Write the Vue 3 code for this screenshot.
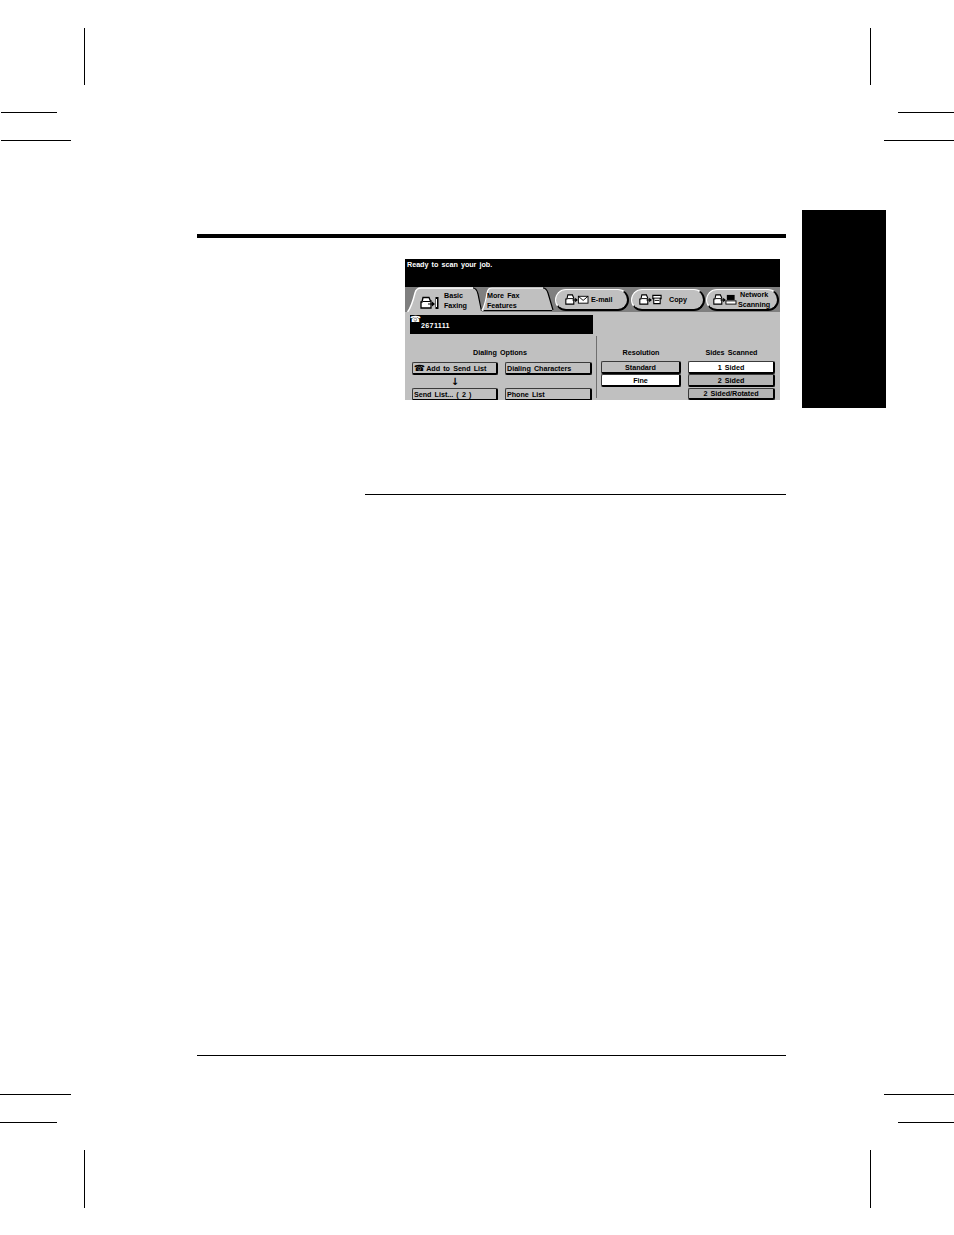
<script setup>
const crops = [
  ['v', 84, 28, 57], ['v', 870, 28, 57], ['v', 84, 1150, 58], ['v', 870, 1150, 58],
  ['h', 1, 112, 56], ['h', 1, 140, 70], ['h', 898, 112, 56], ['h', 884, 140, 70],
  ['h', 0, 1094, 71], ['h', 0, 1122, 57], ['h', 884, 1094, 70], ['h', 898, 1122, 56]
].map(([d, x, y, l]) => ({
  d,
  style: d === 'v'
    ? { left: x + 'px', top: y + 'px', height: l + 'px' }
    : { left: x + 'px', top: y + 'px', width: l + 'px' }
}))

const pills = [
  { id: 'mail', lines: ['E-mail'], cls: 'p-mail' },
  { id: 'copy', lines: ['Copy'], cls: 'p-copy' },
  { id: 'net', lines: ['Network', 'Scanning'], cls: 'p-net' }
]
</script>

<template>
  <div class="page">
    <i v-for="(c, n) in crops" :key="n" class="crop" :class="c.d" :style="c.style"></i>
    <div class="thumb"></div>

    <main class="main">
      <div class="rule-top"></div>

      <section class="panel">
        <div class="status">Ready to scan your job.</div>

        <div class="strip">
          <div class="trap active">
            <svg class="trap-bg" viewBox="0 0 75 25" width="75" height="25">
              <path d="M0.5 25 C3 22 6 14 8 6 C9 2 11 1 14 1 L66 1 C69 1 70 3 71 7 L75 25 Z" fill="#c0c0c0" />
              <path d="M0.5 25 C3 22 6 14 8 6 C9 2 11 1 14 1 L66 1" fill="none" stroke="#fff" stroke-width="1.4" />
              <path d="M66 1 C69 1 70 3 71 7 L74.5 24" fill="none" stroke="#000" stroke-width="1.2" />
            </svg>
            <svg class="icon" viewBox="0 0 19 14" width="19" height="14">
              <path d="M3 1.5 H9 L10.5 5 H11 V12 H1 V6 H2 Z" fill="#fff" stroke="#000" stroke-width="1.3" />
              <path d="M3 5.5 H10" stroke="#000" />
              <path d="M8 7.5 H12 V5.5 L15 8 L12 10.5 V8.5 H8 Z" fill="#000" />
              <path d="M15.5 1 H18.5 V13 H15.5 Z" fill="#000" />
              <path d="M16.5 3 V11" stroke="#fff" />
            </svg>
            <span class="tlabel"><span>Basic</span><span>Faxing</span></span>
          </div>

          <div class="trap more">
            <svg class="trap-bg" viewBox="0 0 73 25" width="73" height="25">
              <path d="M0 23 C3 20 5 12 6 6 C7 2 8 1 11 1 L62 1 C65 1 66 3 67 6 L72 23 Z" fill="#c0c0c0" />
              <path d="M1 24 C3 20 5 12 6 6 C7 2 8 1 11 1 L62 1" fill="none" stroke="#fff" stroke-width="1.2" />
              <path d="M62 1 C65 1 66 3 67 6 L72 23" fill="none" stroke="#000" stroke-width="1.2" />
              <path d="M3 23.5 H71" stroke="#000" stroke-width="1.2" />
            </svg>
            <span class="tlabel"><span>More Fax</span><span>Features</span></span>
          </div>

          <div v-for="p in pills" :key="p.id" class="pill" :class="p.cls">
            <svg class="icon" viewBox="0 0 26 12" width="24" height="11">
              <path d="M3 1 H8 L9.5 4.5 V11 H0.8 V5.5 H2 Z" fill="#fff" stroke="#000" stroke-width="1.2" />
              <path d="M2.5 5 H9" stroke="#000" />
              <path d="M8 6 H11 V4 L14 6.5 L11 9 V7.2 H8 Z" fill="#000" />
              <template v-if="p.id === 'mail'">
                <rect x="14.5" y="2.5" width="10.5" height="7.5" fill="#fff" stroke="#000" />
                <path d="M14.5 2.5 L19.7 7 L25 2.5" fill="none" stroke="#000" />
              </template>
              <template v-else-if="p.id === 'copy'">
                <path d="M15 1.5 H24 V5 H23 V10.5 H16 V5 H15 Z" fill="#fff" stroke="#000" stroke-width="1.2" />
                <path d="M15 4.5 H24 M17 7 H22" stroke="#000" />
              </template>
              <template v-else>
                <rect x="15" y="1" width="8.5" height="5.5" fill="#000" />
                <rect x="14" y="7.5" width="11" height="3.5" fill="#fff" stroke="#000" />
              </template>
            </svg>
            <span class="tlabel"><span v-for="l in p.lines" :key="l">{{ l }}</span></span>
          </div>
        </div>

        <div class="body">
          <div class="left">
            <div class="field">
              <span class="field-phone">☎</span>
              <span class="field-num">2671111</span>
            </div>
            <h4 class="head">Dialing Options</h4>
            <div class="dial">
              <button class="btn start"><span class="phone">☎</span>Add to Send List</button>
              <button class="btn start">Dialing Characters</button>
              <span class="arrow">↓</span>
              <span></span>
              <button class="btn start">Send List... ( 2 )</button>
              <button class="btn start">Phone List</button>
            </div>
          </div>

          <div class="right">
            <div class="col res">
              <h4 class="head">Resolution</h4>
              <button class="btn">Standard</button>
              <button class="btn on">Fine</button>
            </div>
            <div class="col sides">
              <h4 class="head">Sides Scanned</h4>
              <button class="btn on">1 Sided</button>
              <button class="btn dim">2 Sided</button>
              <button class="btn dim last">2 Sided/Rotated</button>
            </div>
          </div>
        </div>
      </section>

      <div class="rule-mid"></div>
      <div class="rule-bot"></div>
    </main>
  </div>
</template>

<style>
html, body { margin: 0; background: #fff; }
</style>

<style scoped>
.page {
  position: relative;
  width: 954px;
  height: 1235px;
  overflow: hidden;
  background: #fff;
  font-family: "Liberation Sans", Arial, sans-serif;
}
.crop { position: absolute; background: #000; display: block; }
.crop.v { width: 1px; }
.crop.h { height: 1px; }
.thumb {
  position: absolute;
  left: 802px;
  top: 210px;
  width: 84px;
  height: 198px;
  background: #000;
}
.main {
  width: 589px;
  margin-left: 197px;
  padding-top: 234px;
}
.rule-top { height: 4px; background: #000; }
.panel {
  width: 375px;
  height: 141px;
  margin: 21px 0 0 208px;
  background: #c0c0c0;
  overflow: hidden;
  display: flex;
  flex-direction: column;
  font-size: 7.2px;
  font-weight: 700;
  line-height: 9px;
  letter-spacing: -0.03px;
  word-spacing: 1.2px;
  color: #000;
}
.status {
  height: 28px;
  flex: none;
  box-sizing: border-box;
  background: #000;
  color: #fff;
  padding: 1px 0 0 2px;
}
.strip {
  height: 25px;
  flex: none;
  background: #7f7f7f;
  display: flex;
  align-items: flex-start;
  padding-left: 2px;
  box-sizing: border-box;
}
.trap {
  position: relative;
  height: 25px;
  display: flex;
  align-items: center;
  flex: none;
}
.trap-bg { position: absolute; left: 0; top: 0; }
.active { width: 74px; }
.active .icon { position: relative; margin-left: 13px; margin-top: 7px; }
.active .tlabel { position: relative; margin-left: 5px; margin-top: 2px; }
.more { width: 72px; }
.more .tlabel { position: relative; margin-left: 6px; margin-top: 2px; }
.tlabel { display: flex; flex-direction: column; line-height: 9.5px; }
.pill {
  flex: none;
  box-sizing: border-box;
  height: 22px;
  margin-top: 2px;
  border-radius: 11px;
  background: #c0c0c0;
  border: 1px solid #fff;
  border-right: 2px solid #000;
  border-bottom: 2px solid #000;
  display: flex;
  align-items: center;
}
.p-mail { width: 74px; margin-left: 2px; padding-left: 9px; }
.p-mail .tlabel { margin-left: 2px; }
.p-copy { width: 74px; margin-left: 2px; padding-left: 7px; }
.p-copy .tlabel { margin-left: 6px; }
.p-net { width: 73px; margin-left: 1px; padding-left: 6px; }
.p-net .tlabel { margin-left: 1px; align-items: center; }
.body {
  flex: 1;
  display: flex;
  min-height: 0;
}
.left {
  width: 191px;
  flex: none;
  padding-top: 3px;
  box-sizing: border-box;
}
.field {
  position: relative;
  height: 19px;
  margin: 0 3px 0 5px;
  box-sizing: border-box;
  background: #000;
  color: #fff;
  padding: 6px 0 0 11px;
}
.field-phone {
  position: absolute;
  left: 0;
  top: 0;
  font: 9px/9px "DejaVu Sans", sans-serif;
}
.field-num { letter-spacing: 0.3px; }
.head {
  margin: 0;
  font: inherit;
  text-align: center;
  flex: none;
  height: 13px;
}
.left .head {
  width: 190px;
  height: 14px;
  padding-top: 14px;
}
.dial {
  display: grid;
  grid-template-columns: 86px 87px;
  column-gap: 7px;
  margin-left: 7px;
}
.btn {
  display: block;
  flex: none;
  box-sizing: border-box;
  height: 13px;
  padding: 1px 0 0;
  font: inherit;
  letter-spacing: inherit;
  word-spacing: inherit;
  color: #000;
  background: #c0c0c0;
  border: 1px solid #3a3a3a;
  border-right: 2px solid #000;
  border-bottom: 2px solid #000;
  border-radius: 2px;
  text-align: center;
  white-space: nowrap;
  line-height: 9px;
}
.btn.start { text-align: left; padding-left: 1px; }
.phone {
  font: 9px/9px "DejaVu Sans", sans-serif;
  margin-right: 1px;
}
.arrow {
  height: 13px;
  text-align: center;
  font: 700 10px/13px "DejaVu Sans", sans-serif;
}
.right {
  position: relative;
  flex: 1;
  display: flex;
  padding-left: 5px;
  box-sizing: border-box;
}
.right::before {
  content: "";
  position: absolute;
  left: 0;
  top: 24px;
  width: 1px;
  height: 62px;
  background: #6f6f6f;
}
.col { flex: none; display: flex; flex-direction: column; padding-top: 36px; }
.res { width: 80px; }
.sides { width: 87px; margin-left: 7px; }
.btn.on { background: #fff; }
.btn.dim { background: #b4b4b4; }
.btn.last { margin-top: 1px; height: 12px; padding-top: 0; }
.rule-mid {
  height: 1px;
  background: #000;
  margin: 94px 0 0 168px;
}
.rule-bot {
  height: 1px;
  background: #000;
  margin-top: 560px;
}
</style>
